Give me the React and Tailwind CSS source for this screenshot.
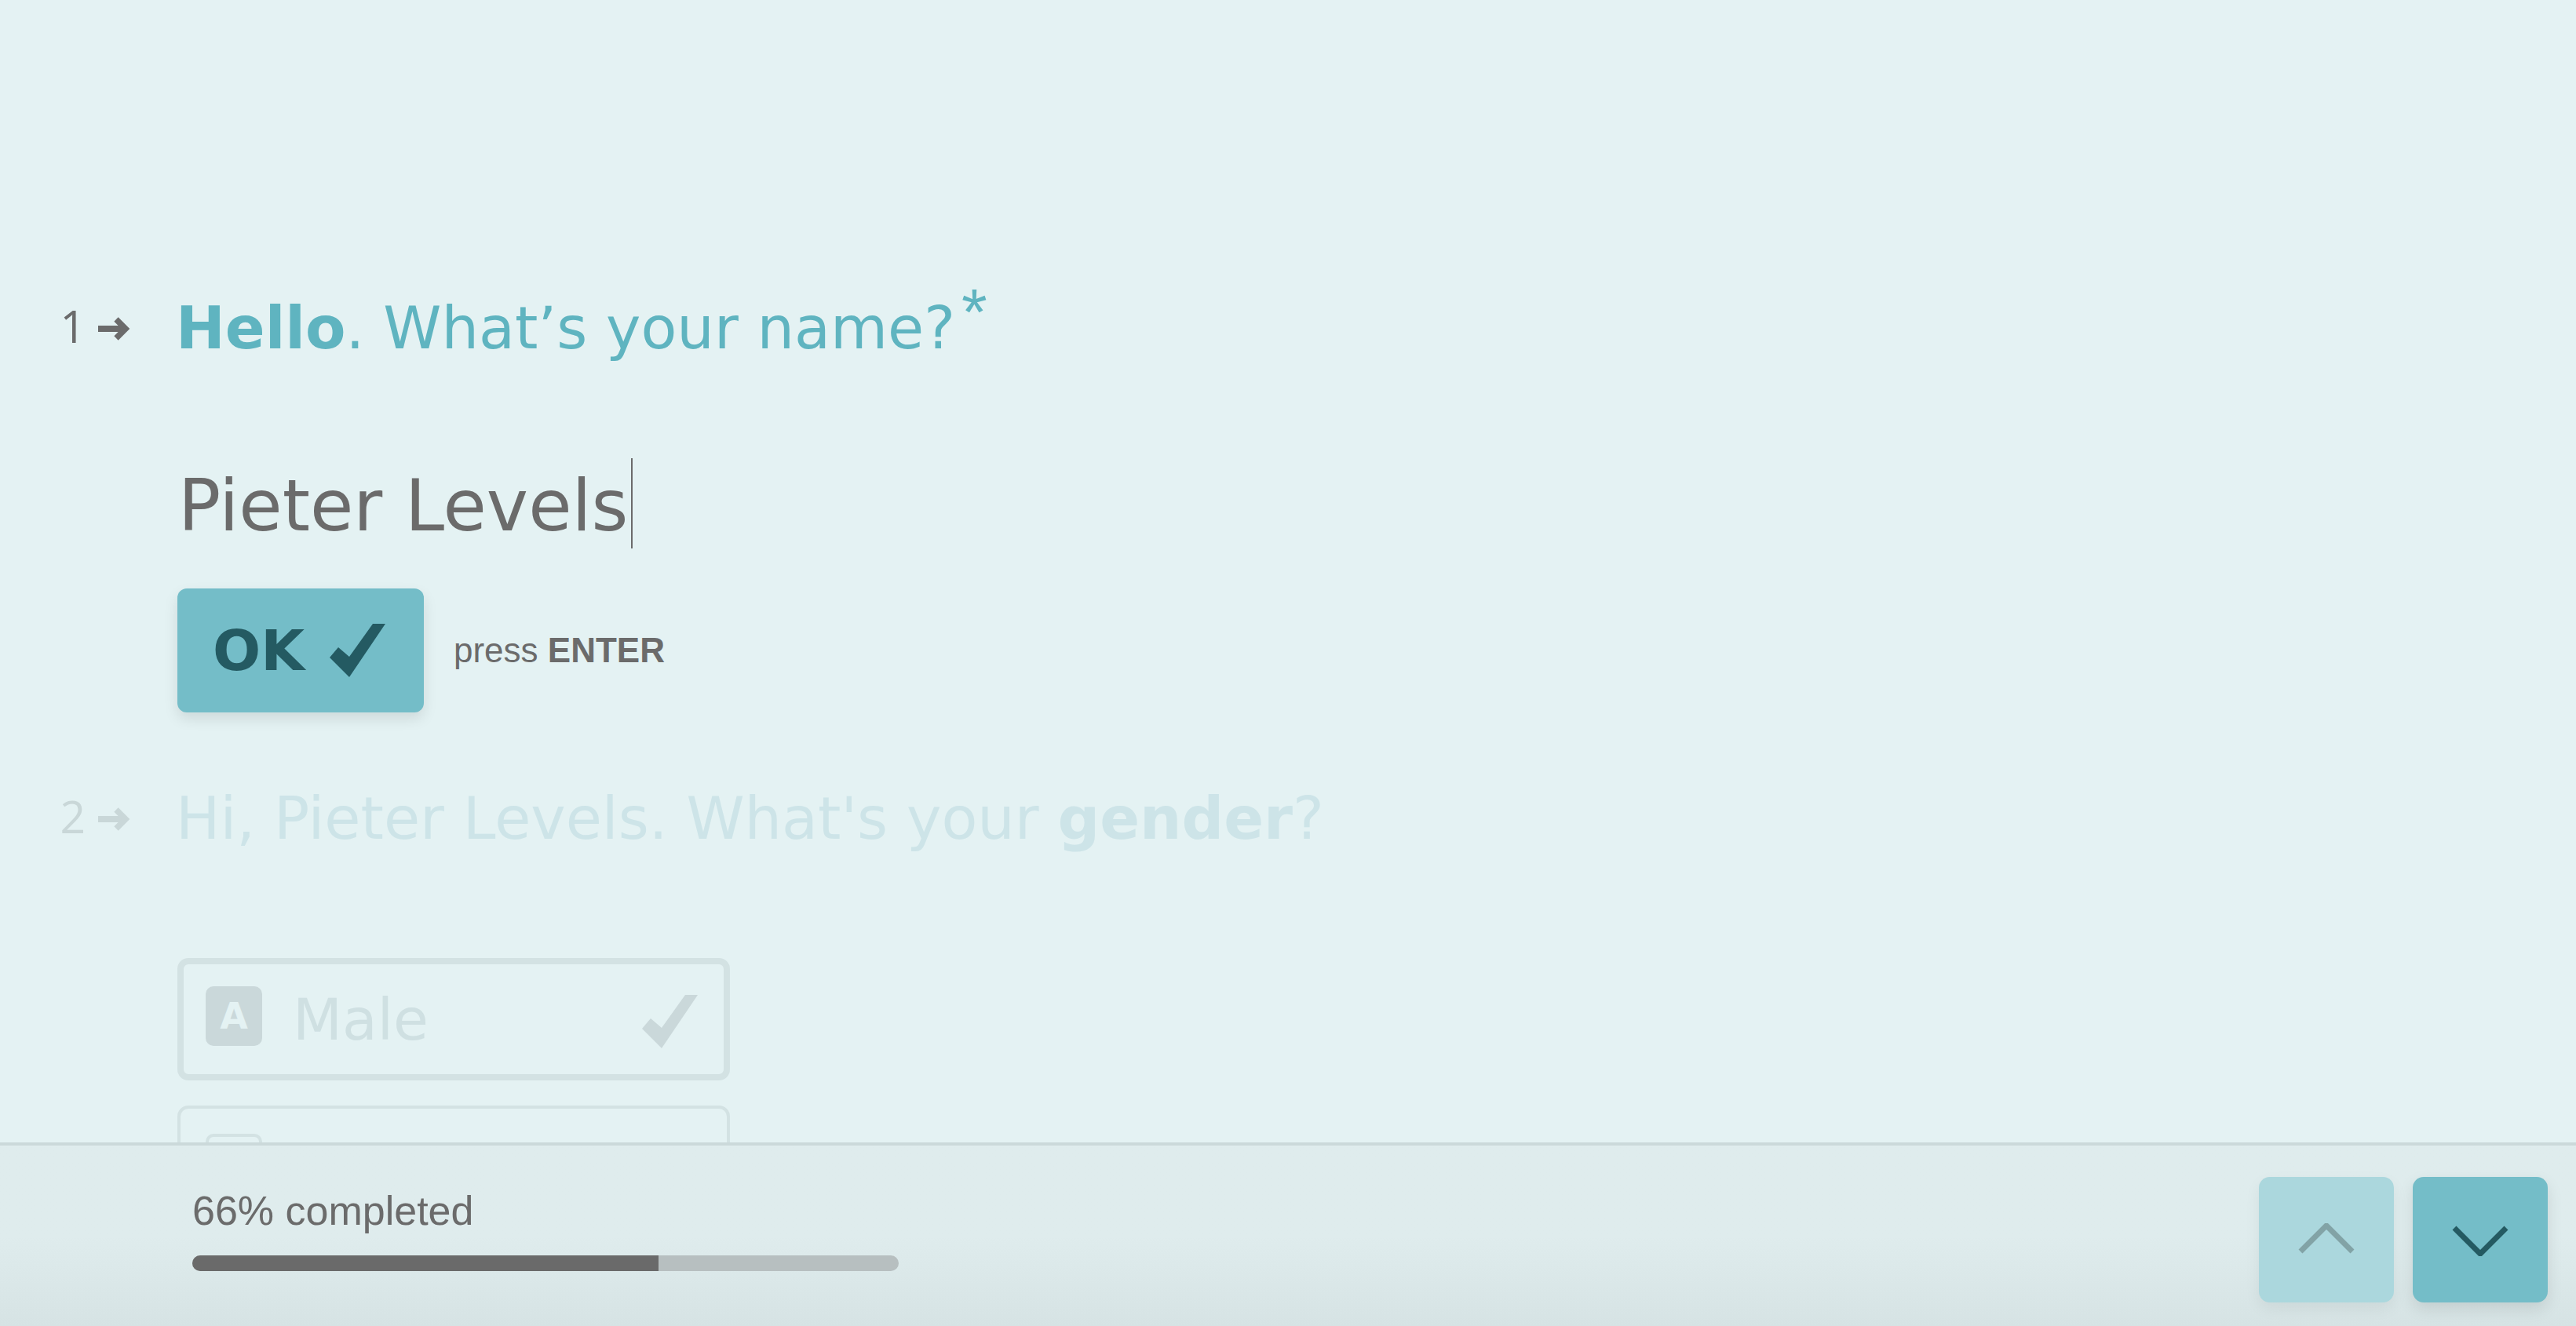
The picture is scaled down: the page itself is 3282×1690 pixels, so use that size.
import React from 'react';

const ArrowIcon = ({ className }) => (
  <svg className={className} width="42" height="32" viewBox="0 0 42 32" fill="none" stroke="currentColor">
    <path d="M0 16H33" strokeWidth="8" />
    <path d="M23 4L35 16L23 28" strokeWidth="7.5" strokeLinejoin="miter" />
  </svg>
);

const CheckIcon = ({ className }) => (
  <svg className={className} viewBox="0 0 71 68" fill="currentColor">
    <polygon points="0,43 11,30 25,42 55,0 71,0 25,68" />
  </svg>
);

const QuestionNumber = ({ n, dim }) => (
  <div
    className={`flex w-[224px] shrink-0 items-center justify-end gap-[16px] pr-[57px] ${
      dim ? 'text-[#c9d7d8]' : 'text-[#6b6b6b]'
    }`}
  >
    <span className="mb-[6px] font-['Open_Sans',sans-serif] text-[57px] font-normal leading-none">{n}</span>
    <ArrowIcon className="shrink-0" />
  </div>
);

const Choice = ({ letter, label, selected }) => (
  <div
    className={`flex h-[156px] w-[704px] items-start rounded-[14px] border-[#d3e2e3] ${
      selected ? 'border-8 px-[28px] pt-[28px]' : 'border-4 px-[32px] pt-[32px]'
    }`}
  >
    <div
      className={`flex h-[76px] w-[72px] shrink-0 items-center justify-center rounded-[10px] text-[46px] font-bold leading-none ${
        selected ? 'bg-[#cad8da] text-[#e4f2f3]' : 'border-4 border-[#d3e2e3] text-[#d3e2e3]'
      }`}
    >
      {letter}
    </div>
    <span className="ml-[39px] mt-[6px] text-[73px] leading-none text-[#cfe0e2]">{label}</span>
    {selected && <CheckIcon className="ml-auto mr-[5px] mt-[11px] h-[68px] w-[71px] text-[#cad8da]" />}
  </div>
);

export default function App() {
  return (
    <div className="flex h-screen flex-col overflow-hidden bg-[#e4f2f3] font-['DejaVu_Sans',sans-serif]">
      <main className="flex-1 overflow-hidden pt-[381px]">
        {/* Frage 1 */}
        <div className="flex items-center">
          <QuestionNumber n="1" />
          <h1 className="whitespace-nowrap text-[75px] font-normal leading-none text-[#5fb4c0]">
            <span className="font-bold">Hello</span>. What’s your name?
            <span className="relative -top-[17px] ml-[8px] font-['Liberation_Sans',sans-serif] text-[84px] leading-[0]">*</span>
          </h1>
        </div>

        <div className="pl-[224px]">
          {/* Eingabe */}
          <div className="mt-[144px] flex h-[90px] items-center">
            <span className="ml-[3px] text-[90px] leading-none text-[#6b6b6b]">Pieter Levels</span>
            <span className="-mt-[8px] ml-[4px] h-[115px] w-[2px] shrink-0 bg-[#6b6b6b]" />
          </div>

          {/* OK */}
          <div className="mt-[60px] flex items-center">
            <button className="ml-[2px] flex h-[158px] w-[314px] items-center rounded-[12px] bg-[#74bdc8] pl-[45px] text-[#245a62] shadow-[0_8px_18px_rgba(0,0,0,0.1)]">
              <span className="text-[72px] font-bold leading-none">OK</span>
              <CheckIcon className="ml-[32px] h-[68px] w-[71px]" />
            </button>
            <span className="ml-[38px] font-['Liberation_Sans',sans-serif] text-[44px] leading-none text-[#6b6b6b]">
              press <span className="font-bold">ENTER</span>
            </span>
          </div>
        </div>

        {/* Frage 2 */}
        <div className="mt-[98px] flex items-center">
          <QuestionNumber n="2" dim />
          <h2 className="whitespace-nowrap text-[75px] font-normal leading-none text-[#cde4e8]">
            Hi, Pieter Levels. What's your <span className="font-bold">gender</span>?
          </h2>
        </div>

        <div className="mt-[140px] flex flex-col gap-[32px] pl-[226px]">
          <Choice letter="A" label="Male" selected />
          <Choice letter="B" label="Female" />
        </div>
      </main>

      <footer className="flex h-[234px] shrink-0 items-start justify-between border-t-4 border-[#cbd9da] bg-linear-to-b from-[#dfeced] via-[#dfeced] to-[#d6e3e4] pl-[245px] pr-[36px] pt-[40px]">
        <div className="mt-[17px]">
          <p className="font-['Liberation_Sans',sans-serif] text-[52px] leading-none text-[#6b6b6b]">66% completed</p>
          <div className="mt-[31px] h-[20px] w-[900px] overflow-hidden rounded-full bg-[#b7bfc0]">
            <div className="h-full bg-[#6a6a6a]" style={{ width: '66%' }} />
          </div>
        </div>

        <div className="flex gap-[24px]">
          <button className="flex h-[160px] w-[172px] items-center justify-center rounded-[14px] bg-[#abd7dd] shadow-[0_8px_20px_rgba(0,0,0,0.06)]">
            <svg width="76" height="42" viewBox="0 0 76 42" fill="none" stroke="#82a3a6" strokeWidth="7">
              <path d="M5 36L38 3L71 36" />
            </svg>
          </button>
          <button className="flex h-[160px] w-[172px] items-center justify-center rounded-[14px] bg-[#74bdc8] shadow-[0_8px_20px_rgba(0,0,0,0.1)]">
            <svg width="76" height="42" viewBox="0 0 76 42" fill="none" stroke="#245a62" strokeWidth="7">
              <path d="M5 6L38 39L71 6" />
            </svg>
          </button>
        </div>
      </footer>
    </div>
  );
}
